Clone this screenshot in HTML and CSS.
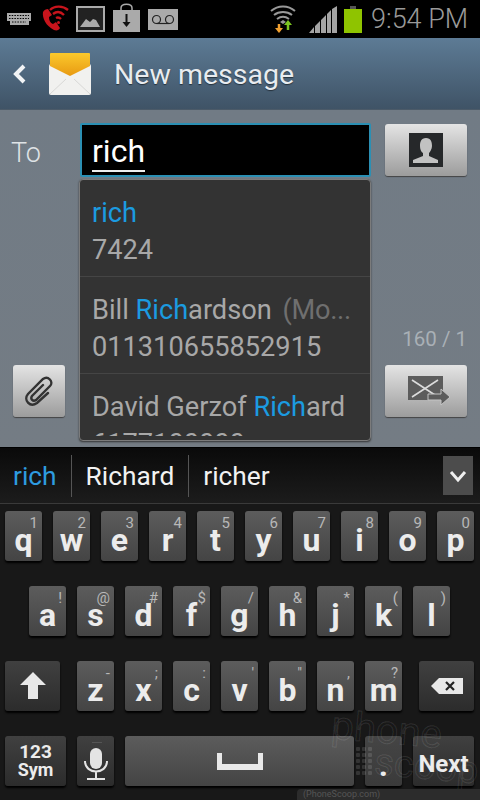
FILE: index.html
```html
<!DOCTYPE html>
<html lang="en">
<head>
    <meta charset="UTF-8">
    <title>New message</title>
    <link rel="stylesheet" href="styles.css">
</head>
<body>
<div class="phone">
    <div class="statusbar">
        <svg class="st st-kbd" viewBox="0 0 24 12"><path d="M0 0h24v8h-2v4H3V8H0z" fill="#aaa"/><path d="M2 2.500h20M2 5.500h20M5 9h14" stroke="#000" stroke-width="1" stroke-dasharray="1.500 1.200" fill="none"/></svg>
        <svg class="st st-call" viewBox="0 0 28 28"><path d="M2 8c-1 6 3 14 11 18 3 1 5 0 6-2l-4-6-3 2c-3-1-4-4-4-7l3-2-4-6c-2 0-4 1-5 3z" fill="#c8141c"/><path d="M9 6c5-5 13-4 18 0M12 10c4-3 8-2 11 1M15 14c2-1 3-1 5 1" stroke="#c8141c" stroke-width="2.400" fill="none"/><circle cx="17.500" cy="18.500" r="1.500" fill="#c8141c"/></svg>
        <svg class="st st-img" viewBox="0 0 29 26"><rect x="1" y="1" width="27" height="24" fill="#222" stroke="#aaa" stroke-width="2"/><path d="M4 21l6-8 4 3 3-3 3 1 4 7z" fill="#aaa"/></svg>
        <svg class="st st-bag" viewBox="0 0 27 29"><path d="M8 8V5c0-5 11-5 11 0v3" stroke="#aaa" stroke-width="1.500" fill="none"/><rect x="0" y="7" width="27" height="22" fill="#aaa"/><path d="M13.500 11v10" stroke="#111" stroke-width="2"/><path d="M9.500 19h8l-4 5z" fill="#111"/></svg>
        <svg class="st st-vm" viewBox="0 0 30 21"><rect width="30" height="21" fill="#aaa"/><circle cx="8.500" cy="10.500" r="4" fill="none" stroke="#222" stroke-width="1.200"/><circle cx="21.500" cy="10.500" r="4" fill="none" stroke="#222" stroke-width="1.200"/><path d="M8.500 14.500h13" stroke="#222" stroke-width="1.200"/></svg>
        <svg class="st st-wifi" viewBox="0 0 26 28"><path d="M1 6c7-6 17-6 24 0M4 10c5-4 13-4 18 0M7 14c4-3 8-3 12 0" stroke="#999" stroke-width="2" fill="none"/><path d="M10 17l3-2 3 2-3 2z" fill="#999"/><path d="M9 19v5" stroke="#f0a030" stroke-width="2.500"/><path d="M5 23h8l-4 5z" fill="#f0a030"/><path d="M18 25v-6" stroke="#7cc520" stroke-width="2.500"/><path d="M14 20h8l-4-5z" fill="#7cc520"/></svg>
        <svg class="st st-signal" viewBox="0 0 28 27"><path d="M0 27l5-6v6zM6 27v-7l5-5v12zM12 27V14l5-5v18zM18 27V8l4-4v23zM23 27V3l5-3v27z" fill="#a4a4a4"/></svg>
        <svg class="st st-batt" viewBox="0 0 18 27"><rect x="6" y="0" width="6" height="3" fill="#555"/><rect y="3" width="18" height="24" fill="#8fc400"/></svg>
        <span class="clock">9:54 PM</span>
    </div>

    <div class="titlebar">
        <svg class="back" viewBox="0 0 16 22"><path d="M12 3L4 11l8 8" fill="none" stroke="#f2f4f6" stroke-width="4"/></svg>
        <svg class="app-icon" viewBox="0 0 44 44">
            <defs>
                <linearGradient id="flap" x1="0" y1="0" x2="0" y2="1">
                    <stop offset="0" stop-color="#fbc92c"/>
                    <stop offset="1" stop-color="#e89a12"/>
                </linearGradient>
            </defs>
            <rect x="1" y="12" width="42" height="31" rx="2" fill="#f1f1ef"/>
            <path d="M3 1h38a1 1 0 0 1 1 1v12L22 24 2 14V2a1 1 0 0 1 1-1z" fill="url(#flap)"/>
            <path d="M2 42l16-15M42 42L26 27" stroke="#d8d8d6" stroke-width="1" fill="none"/>
        </svg>
        <span class="title">New message</span>
    </div>

    <div class="compose">
        <div class="to-row">
            <span class="to-label">To</span>
            <div class="to-input"><span class="typed">rich</span></div>
            <button class="btn btn-contact">
                <svg viewBox="0 0 34 34" width="34" height="34"><rect width="34" height="34" fill="#26282a"/><path d="M17 5c5 0 6 4 6 8 0 3-2 6-3 7v3l9 4v3H4v-3l10-4v-3c-2-1-3-4-3-7 0-4 1-8 6-8z" fill="#c2c2c2"/></svg>
            </button>
        </div>

        <div class="suggest-popup">
            <div class="suggest-list">
                <div class="contact">
                    <div class="contact-name"><span class="hit">rich</span></div>
                    <div class="contact-num">7424</div>
                </div>
                <div class="contact">
                    <div class="contact-name">Bill <span class="hit">Rich</span>ardson <span class="contact-type">(Mo...</span></div>
                    <div class="contact-num">011310655852915</div>
                </div>
                <div class="contact">
                    <div class="contact-name">David Gerzof <span class="hit">Rich</span>ard</div>
                    <div class="contact-num">6177100000</div>
                </div>
            </div>
        </div>

        <div class="send-row">
            <button class="btn btn-attach">
                <svg viewBox="0 0 32 34" width="32" height="34"><path d="M20 11L9 22c-2 3 1 6 4 4L27 12c4-4-2-11-7-7L5 20c-5 6 2 14 9 9l11-10" fill="none" stroke="#333" stroke-width="2.400" stroke-linecap="round"/></svg>
            </button>
            <div class="send-col">
                <span class="counter">160 / 1</span>
                <button class="btn btn-send">
                    <svg viewBox="0 0 42 30" width="42" height="30"><rect x="0" y="0" width="35" height="24" fill="#5c5c5c"/><path d="M4 4l26 17M4 21L30 4" fill="none" stroke="#dcdcdc" stroke-width="1.600"/><path d="M20 18h13v-5l9 8-9 8v-5H20z" fill="#5c5c5c" stroke="#c4c4c4" stroke-width="1"/></svg>
                </button>
            </div>
        </div>
    </div>

    <div class="wordbar">
        <span class="word word-typed">rich</span>
        <span class="word">Richard</span>
        <span class="word">richer</span>
        <button class="word-more">
            <svg viewBox="0 0 18 14" width="18" height="14"><path d="M2 3l7 8 7-8" fill="none" stroke="#f0f0f0" stroke-width="3"/></svg>
        </button>
    </div>

    <div class="keyboard">
        <div class="key-row">
            <div class="key"><sup>1</sup>q</div>
            <div class="key"><sup>2</sup>w</div>
            <div class="key"><sup>3</sup>e</div>
            <div class="key"><sup>4</sup>r</div>
            <div class="key"><sup>5</sup>t</div>
            <div class="key"><sup>6</sup>y</div>
            <div class="key"><sup>7</sup>u</div>
            <div class="key"><sup>8</sup>i</div>
            <div class="key"><sup>9</sup>o</div>
            <div class="key"><sup>0</sup>p</div>
        </div>
        <div class="key-row key-row-home">
            <div class="key"><sup>!</sup>a</div>
            <div class="key"><sup>@</sup>s</div>
            <div class="key"><sup>#</sup>d</div>
            <div class="key"><sup>$</sup>f</div>
            <div class="key"><sup>/</sup>g</div>
            <div class="key"><sup>&amp;</sup>h</div>
            <div class="key"><sup>*</sup>j</div>
            <div class="key"><sup>(</sup>k</div>
            <div class="key"><sup>)</sup>l</div>
        </div>
        <div class="key-row">
            <div class="key key-fn key-shift">
                <svg viewBox="0 0 26 28" width="26" height="28"><path d="M13 0l13 13h-8v14H8V13H0z" fill="#e8e8e8"/></svg>
            </div>
            <div class="key"><sup>-</sup>z</div>
            <div class="key"><sup>;</sup>x</div>
            <div class="key"><sup>:</sup>c</div>
            <div class="key"><sup>'</sup>v</div>
            <div class="key"><sup>"</sup>b</div>
            <div class="key"><sup>,</sup>n</div>
            <div class="key"><sup>?</sup>m</div>
            <div class="key key-fn key-del">
                <svg viewBox="0 0 32 16" width="32" height="16"><path d="M8 0h24v16H8L0 8z" fill="#e8e8e8"/><path d="M15 4l8 8M23 4l-8 8" stroke="#222" stroke-width="2.200"/></svg>
            </div>
        </div>
        <div class="key-row">
            <div class="key key-fn key-sym"><span>123</span><span>Sym</span></div>
            <div class="key key-fn">
                <svg viewBox="0 0 24 38" width="24" height="38"><path d="M8 0.500h10" stroke="#555" stroke-width="1"/><rect x="6" y="6" width="12" height="21" rx="6" fill="#e4e4e4"/><path d="M1 19c0 14 22 14 22 0M12 30v6M3 37h18" fill="none" stroke="#e4e4e4" stroke-width="2"/></svg>
            </div>
            <div class="key key-space">
                <svg viewBox="0 0 46 18" width="46" height="18"><path d="M2 1v14h42V1" fill="none" stroke="#e8e8e8" stroke-width="6"/></svg>
            </div>
            <div class="key key-dot">.</div>
            <div class="key key-fn key-next">Next</div>
        </div>
    </div>

    <div class="watermark"><span>phone</span><span class="wm-scoop">scoop</span></div>
    <div class="wm-dots"></div>
    <div class="wm-strip">(PhoneScoop.com)</div>
</div>
</body>
</html>
```

FILE: styles.css
```css
* {
    box-sizing: border-box;
}
html, body {
    margin: 0;
    padding: 0;
    background: #000;
}
body {
    font-family: Roboto, "Noto Sans", sans-serif;
}
.phone {
    position: relative;
    width: 480px;
    height: 800px;
    overflow: hidden;
    display: flex;
    flex-direction: column;
}

/* status bar */
.statusbar {
    height: 38px;
    background: #000;
    display: flex;
    align-items: center;
    padding-left: 7px;
}
.st {
    display: block;
    flex: none;
}
.st-kbd { width: 24px; height: 12px; }
.st-call { width: 28px; height: 28px; margin-left: 10px; margin-top: -2px; }
.st-img { width: 29px; height: 26px; margin-left: 7px; }
.st-bag { width: 27px; height: 29px; margin-left: 8px; margin-top: -4px; }
.st-vm { width: 30px; height: 21px; margin-left: 8px; }
.st-wifi { width: 26px; height: 28px; margin-left: 92px; }
.st-signal { width: 28px; height: 27px; margin-left: 13px; }
.st-batt { width: 18px; height: 27px; margin-left: 7px; }
.clock {
    margin-left: 9px;
    font-size: 27px;
    color: #9a9a9a;
    font-weight: 300;
    white-space: nowrap;
}

/* title */
.titlebar {
    height: 72px;
    background: linear-gradient(#5d7b95, #3f5366);
    display: flex;
    align-items: center;
    border-bottom: 1px solid #4b5a68;
}
.back {
    width: 16px;
    height: 22px;
    margin-left: 12px;
}
.app-icon {
    width: 44px;
    height: 44px;
    margin-left: 20px;
}
.title {
    margin-left: 22px;
    padding-top: 2px;
    font-size: 28.500px;
    color: #e8ecf0;
    text-shadow: 0 1px 1px #26323d;
}

/* compose area */
.compose {
    position: relative;
    height: 337px;
    background: linear-gradient(#717b85, #747c84);
    padding: 13px 13px 30px 11px;
    display: flex;
    flex-direction: column;
    justify-content: space-between;
}
.to-row {
    display: flex;
    align-items: center;
}
.to-label {
    width: 69px;
    padding-top: 6px;
    font-size: 27px;
    color: #dfe3e6;
    font-weight: 300;
}
.to-input {
    width: 291px;
    height: 54px;
    background: #000;
    border: 2px solid #2b8fb3;
    border-radius: 2px;
    padding: 7px 0 0 10px;
}
.typed {
    font-size: 32px;
    line-height: 38px;
    color: #fff;
    border-bottom: 2px solid #eee;
    display: inline-block;
    height: 40px;
}
.btn {
    display: flex;
    align-items: center;
    justify-content: center;
    padding: 0;
    border: 0;
    border-radius: 3px;
    background: linear-gradient(#e4e4e4, #9c9c9c);
    box-shadow: 0 1px 1px #444;
}
.btn-contact {
    width: 82px;
    height: 52px;
    margin-left: 14px;
}
.send-row {
    display: flex;
    align-items: flex-end;
    justify-content: space-between;
    padding-left: 2px;
}
.btn-attach {
    width: 52px;
    height: 52px;
}
.send-col {
    display: flex;
    flex-direction: column;
    align-items: flex-end;
    gap: 13px;
}
.counter {
    font-size: 20.500px;
    color: #a9b0b6;
    line-height: 26px;
}
.btn-send {
    width: 82px;
    height: 52px;
    padding-left: 6px;
}

/* contact dropdown */
.suggest-popup {
    position: absolute;
    left: 79px;
    top: 69px;
    width: 292px;
    height: 262px;
    background: #333;
    border: 1px solid #7b7b7b;
    border-radius: 4px;
    box-shadow: 0 1px 2px #333;
    padding-bottom: 4px;
}
.suggest-list {
    height: 100%;
    overflow: hidden;
}
.contact {
    height: 97px;
    padding: 15px 0 0 12px;
    border-bottom: 1px solid #454545;
}
.contact-name, .contact-num {
    font-size: 27.200px;
    line-height: 37px;
    color: #a8a8a8;
    white-space: nowrap;
}
.hit {
    color: #1b9be0;
}
.contact-type {
    color: #6f6f6f;
    margin-left: 4px;
    letter-spacing: -0.3px;
}

/* word suggestions */
.wordbar {
    height: 56px;
    background: linear-gradient(#0a0a0a, #1c1c1c);
    border-top: 1px solid #000;
    display: flex;
    align-items: center;
    position: relative;
}
.word {
    font-size: 26.300px;
    color: #f2f2f2;
    padding: 0 14px 0 14px;
    height: 42px;
    line-height: 42px;
    border-right: 1px solid #555;
}
.word-typed {
    color: #2e9ce0;
    padding-left: 13px;
}
.word:nth-child(3) {
    border-right: 0;
}
.word-more {
    margin-left: auto;
    margin-right: 7px;
    width: 30px;
    height: 39px;
    background: #4c4c4c;
    border: 0;
    padding: 0;
    display: flex;
    align-items: center;
    justify-content: center;
}

/* keyboard */
.keyboard {
    flex: 1;
    background: #181818;
    border-top: 1px solid #3a3a3a;
    padding-top: 7px;
    display: flex;
    flex-direction: column;
    gap: 25px;
}
.key-row {
    display: flex;
    gap: 11px;
    padding-left: 5px;
}
.key-row-home {
    padding-left: 29px;
}
.key {
    position: relative;
    width: 37px;
    height: 50px;
    border-radius: 3px;
    background: linear-gradient(#5c5c5c, #444);
    box-shadow: 0 2px 2px #000;
    color: #ececec;
    font-size: 32px;
    font-weight: 700;
    display: flex;
    align-items: flex-end;
    justify-content: center;
    padding-bottom: 6px;
    line-height: 30px;
}
.key sup {
    position: absolute;
    top: 3px;
    right: 4px;
    font-size: 15px;
    line-height: 18px;
    font-weight: 400;
    color: #b8b8b8;
}
.key-fn {
    background: linear-gradient(#404040, #2c2c2c);
    align-items: center;
    padding-bottom: 0;
}
.key-shift {
    width: 55px;
    margin-right: 6px;
}
.key-del {
    width: 55px;
    margin-left: 6px;
}
.key-sym {
    width: 61px;
    flex-direction: column;
    font-size: 18px;
    line-height: 18px;
}
.key-sym span:first-child {
    font-size: 19px;
}
.key-space {
    width: 229px;
    align-items: center;
    padding-bottom: 0;
}
.key-dot {
    background: linear-gradient(#454545, #3a3a3a);
}
.key-next {
    width: 61px;
    font-size: 24px;
    padding-top: 6px;
}

/* site watermark over the picture */
.watermark {
    position: absolute;
    left: 330px;
    top: 716px;
    display: flex;
    flex-direction: column;
    font-size: 40px;
    line-height: 32px;
    color: rgba(255, 255, 255, 0.02);
    -webkit-text-stroke: 1px rgba(255, 255, 255, 0.1);
    transform: rotate(5deg);
}
.wm-scoop {
    margin-left: 46px;
    font-size: 38px;
}
.wm-dots {
    position: absolute;
    left: 355px;
    top: 746px;
    width: 18px;
    height: 30px;
    background-image: radial-gradient(circle, rgba(255, 255, 255, 0.12) 2px, transparent 2.500px);
    background-size: 6px 6px;
}
.wm-strip {
    position: absolute;
    left: 297px;
    top: 789px;
    width: 183px;
    height: 11px;
    border-radius: 4px 0 0 0;
    background: #2c2c2c;
    color: #555;
    font-size: 9px;
    line-height: 11px;
    padding-left: 6px;
}
```
